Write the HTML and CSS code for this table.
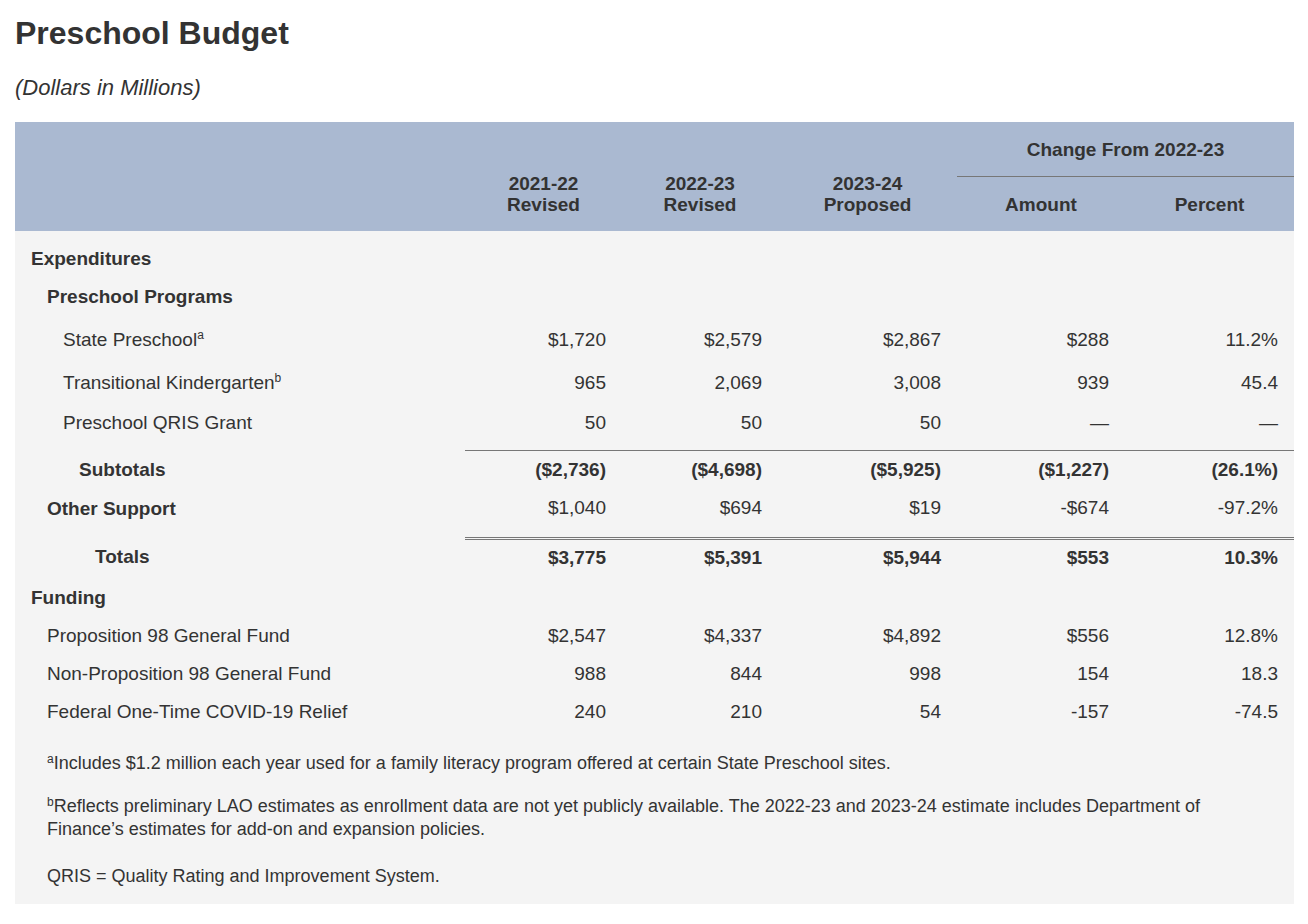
FILE: index.html
```html
<!DOCTYPE html>
<html lang="en">
<head>
<meta charset="utf-8">
<title>Preschool Budget</title>
<link rel="stylesheet" href="styles.css">
</head>
<body>
<h1 class="title">Preschool Budget</h1>
<p class="subtitle">(Dollars in Millions)</p>
<div class="panel">
  <table class="budget">
    <colgroup>
      <col class="c-label">
      <col class="c1">
      <col class="c2">
      <col class="c3">
      <col class="c4">
      <col class="c5">
    </colgroup>
    <thead>
      <tr>
        <th rowspan="2"></th>
        <th rowspan="2" class="yr">2021-22<br>Revised</th>
        <th rowspan="2" class="yr">2022-23<br>Revised</th>
        <th rowspan="2" class="yr">2023-24<br>Proposed</th>
        <th colspan="2" class="group">Change From 2022-23</th>
      </tr>
      <tr>
        <th class="sub">Amount</th>
        <th class="sub">Percent</th>
      </tr>
    </thead>
    <tbody>
      <tr class="first">
        <td class="l0 b">Expenditures</td><td></td><td></td><td></td><td></td><td></td>
      </tr>
      <tr>
        <td class="l1 b">Preschool Programs</td><td></td><td></td><td></td><td></td><td></td>
      </tr>
      <tr class="supped">
        <td class="l2">State Preschool<sup>a</sup></td>
        <td class="n">$1,720</td><td class="n">$2,579</td><td class="n">$2,867</td><td class="n">$288</td><td class="n">11.2%</td>
      </tr>
      <tr class="supped">
        <td class="l2">Transitional Kindergarten<sup>b</sup></td>
        <td class="n">965</td><td class="n">2,069</td><td class="n">3,008</td><td class="n">939</td><td class="n">45.4</td>
      </tr>
      <tr class="pre-sub">
        <td class="l2">Preschool QRIS Grant</td>
        <td class="n">50</td><td class="n">50</td><td class="n">50</td><td class="n">—</td><td class="n">—</td>
      </tr>
      <tr class="subtotal b">
        <td class="l3">Subtotals</td>
        <td class="n">($2,736)</td><td class="n">($4,698)</td><td class="n">($5,925)</td><td class="n">($1,227)</td><td class="n">(26.1%)</td>
      </tr>
      <tr class="pre-total">
        <td class="l1 b">Other Support</td>
        <td class="n">$1,040</td><td class="n">$694</td><td class="n">$19</td><td class="n">-$674</td><td class="n">-97.2%</td>
      </tr>
      <tr class="total b">
        <td class="l4">Totals</td>
        <td class="n">$3,775</td><td class="n">$5,391</td><td class="n">$5,944</td><td class="n">$553</td><td class="n">10.3%</td>
      </tr>
      <tr>
        <td class="l0 b">Funding</td><td></td><td></td><td></td><td></td><td></td>
      </tr>
      <tr>
        <td class="l1">Proposition 98 General Fund</td>
        <td class="n">$2,547</td><td class="n">$4,337</td><td class="n">$4,892</td><td class="n">$556</td><td class="n">12.8%</td>
      </tr>
      <tr>
        <td class="l1">Non-Proposition 98 General Fund</td>
        <td class="n">988</td><td class="n">844</td><td class="n">998</td><td class="n">154</td><td class="n">18.3</td>
      </tr>
      <tr>
        <td class="l1">Federal One-Time COVID-19 Relief</td>
        <td class="n">240</td><td class="n">210</td><td class="n">54</td><td class="n">-157</td><td class="n">-74.5</td>
      </tr>
    </tbody>
  </table>
  <div class="notes">
    <p class="note"><sup>a</sup>Includes $1.2 million each year used for a family literacy program offered at certain State Preschool sites.</p>
    <p class="note"><sup>b</sup>Reflects preliminary LAO estimates as enrollment data are not yet publicly available. The 2022-23 and 2023-24 estimate includes Department of Finance’s estimates for add-on and expansion policies.</p>
    <p class="note abbr">QRIS = Quality Rating and Improvement System.</p>
  </div>
</div>
</body>
</html>
```

FILE: styles.css
```css
html, body {
  margin: 0;
  padding: 0;
  background: #ffffff;
}
body {
  padding: 0 14px 0 15px;
  font-family: "Liberation Sans", Arial, Helvetica, sans-serif;
  color: #333333;
}
.title {
  margin: 16px 0 0;
  font-size: 32px;
  line-height: 34px;
  font-weight: bold;
  color: #333333;
}
.subtitle {
  margin: 26px 0 0;
  font-size: 22px;
  line-height: 23px;
  font-style: italic;
}
.panel {
  margin-top: 23px;
  background: #f4f4f4;
  padding-bottom: 16px;
}
.budget {
  width: 100%;
  table-layout: fixed;
  border-collapse: collapse;
  font-size: 19px;
  line-height: 22px;
}
.c-label { width: 450px; }
.c1 { width: 157px; }
.c2 { width: 156px; }
.c3 { width: 179px; }
.c4 { width: 168px; }
.c5 { width: 169px; }

.budget thead th {
  background: #aab9d1;
  font-weight: bold;
  text-align: center;
  padding: 0 8px;
  color: #333333;
}
.budget thead th.yr {
  vertical-align: bottom;
  line-height: 21px;
  padding-bottom: 16px;
}
.budget thead th.group {
  padding-top: 17px;
  padding-bottom: 15px;
  border-bottom: 1px solid #777777;
}
.budget thead th.sub {
  padding-top: 17px;
  padding-bottom: 15px;
}

.budget td {
  padding: 8px 16px 8px 0;
  vertical-align: middle;
}
.budget td.n {
  text-align: right;
}
.b td, td.b { font-weight: bold; }
.l0 { padding-left: 16px !important; }
.l1 { padding-left: 32px !important; }
.l2 { padding-left: 48px !important; }
.l3 { padding-left: 64px !important; }
.l4 { padding-left: 80px !important; }

.budget sup {
  font-size: 12px;
  line-height: 0;
  vertical-align: 7px;
}
.first td { padding-top: 17px; }
.supped td { padding-top: 13px; }
.pre-sub td { padding-top: 10px; padding-bottom: 16px; }
.subtotal td.n { border-top: 1px solid #777777; }
.subtotal td { padding-top: 8px; }
.pre-total td { padding-bottom: 18px; }
.total td.n { border-top: 3px double #777777; }
.total td { padding-top: 7px; padding-bottom: 10px; }

.notes {
  padding: 21px 60px 0 32px;
  font-size: 18px;
  line-height: 23px;
}
.note {
  margin: 0 0 20px;
}
.note sup {
  font-size: 12px;
  line-height: 0;
  vertical-align: 6px;
}
.note.abbr {
  margin: 24px 0 0;
}
```
